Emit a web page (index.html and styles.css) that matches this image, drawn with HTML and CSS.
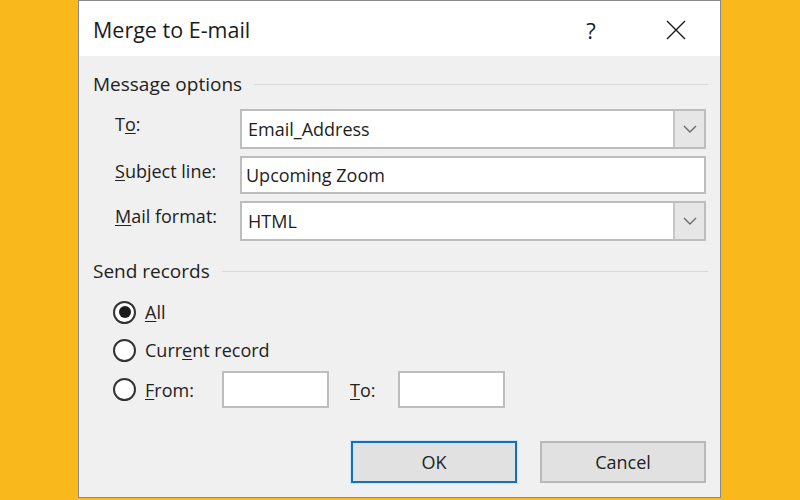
FILE: index.html
```html
<!DOCTYPE html>
<html lang="en">
<head>
<meta charset="utf-8">
<title>Merge to E-mail</title>
<link rel="stylesheet" href="styles.css">
</head>
<body>
<div class="dialog">
  <div class="titlebar">
    <div class="title">Merge to E-mail</div>
    <div class="tb-actions">
      <span class="tb-help">?</span>
      <span class="tb-close">
        <svg width="20" height="20" viewBox="0 0 20 20"><path d="M1 1 L19 19 M19 1 L1 19" stroke="#1a1a1a" stroke-width="1.4" fill="none"/></svg>
      </span>
    </div>
  </div>

  <div class="group-head">Message options</div>
  <div class="fields">
    <div class="label">T<u>o</u>:</div>
    <div class="combo">
      <div class="value">Email_Address</div>
      <div class="arrow"><svg width="14" height="8" viewBox="0 0 14 8"><path d="M1 1 L7 7 L13 1" stroke="#6a6a6a" stroke-width="1.4" fill="none"/></svg></div>
    </div>
    <div class="label"><u>S</u>ubject line:</div>
    <div class="textbox">Upcoming Zoom</div>
    <div class="label"><u>M</u>ail format:</div>
    <div class="combo">
      <div class="value">HTML</div>
      <div class="arrow"><svg width="14" height="8" viewBox="0 0 14 8"><path d="M1 1 L7 7 L13 1" stroke="#6a6a6a" stroke-width="1.4" fill="none"/></svg></div>
    </div>
  </div>

  <div class="group-head head-send">Send records</div>
  <div class="radios">
    <div class="radio-row row-all">
      <span class="radio checked"></span><span class="rlabel"><u>A</u>ll</span>
    </div>
    <div class="radio-row row-current">
      <span class="radio"></span><span class="rlabel">Curr<u>e</u>nt record</span>
    </div>
    <div class="radio-row row-from">
      <span class="radio"></span><span class="rlabel from-label"><u>F</u>rom:</span>
      <span class="smallbox"></span>
      <span class="to-label"><u>T</u>o:</span>
      <span class="smallbox"></span>
    </div>
  </div>

  <div class="buttons">
    <div class="btn primary">OK</div>
    <div class="btn">Cancel</div>
  </div>
</div>
</body>
</html>
```

FILE: styles.css
```css
body {
  margin: 0;
  background: #f9b81b;
  font-family: "Open Sans", "Noto Sans", sans-serif;
  color: #1e1e1e;
}

.dialog {
  margin-left: 78px;
  width: 643px;
  height: 498px;
  box-sizing: border-box;
  border: 1px solid #8a8a8a;
  background: #f0f0f0;
  display: flex;
  flex-direction: column;
}

.titlebar {
  height: 55px;
  background: #ffffff;
  display: flex;
  align-items: center;
  padding-left: 14px;
  padding-top: 2px;
  box-sizing: border-box;
}

.title {
  font-size: 21.5px;
  color: #1b1b1b;
  flex: 1;
}

.tb-actions {
  display: flex;
  align-items: center;
  padding-right: 21px;
}

.tb-help {
  width: 40px;
  text-align: center;
  font-size: 22px;
  margin-right: 42px;
  color: #1b1b1b;
}

.tb-close {
  width: 46px;
  display: flex;
  justify-content: center;
}

.group-head {
  display: flex;
  align-items: center;
  height: 22px;
  margin-top: 17px;
  padding-left: 14px;
  padding-right: 12px;
  font-size: 19px;
  color: #222;
}

.group-head::after {
  content: "";
  flex: 1;
  height: 1px;
  background: #d9d9d9;
  margin-left: 12px;
}

.head-send {
  margin-top: 19px;
}

.fields {
  margin-top: 14px;
  padding-left: 36px;
  padding-right: 14px;
  display: grid;
  grid-template-columns: 125px 1fr;
  row-gap: 7px;
}

.label {
  font-size: 18px;
  line-height: 22px;
  padding-top: 4px;
  color: #222;
}

u {
  text-underline-offset: 2px;
}

.combo {
  height: 40px;
  box-sizing: border-box;
  border: 2px solid #bdbdbd;
  background: #ffffff;
  display: flex;
}

.combo .value {
  flex: 1;
  align-self: center;
  padding-left: 6px;
  font-size: 18px;
}

.combo .arrow {
  width: 29px;
  background: #e6e6e6;
  border-left: 2px solid #c6c6c6;
  display: flex;
  align-items: center;
  justify-content: center;
}

.textbox {
  height: 38px;
  box-sizing: border-box;
  border: 2px solid #bdbdbd;
  background: #ffffff;
  display: flex;
  align-items: center;
  padding-left: 4px;
  font-size: 18px;
}

.radios {
  margin-top: 18px;
  padding-left: 34px;
  display: flex;
  flex-direction: column;
}

.radio-row {
  display: flex;
  align-items: center;
  height: 24px;
  font-size: 18px;
  color: #222;
}

.row-current {
  margin-top: 14px;
}

.row-from {
  margin-top: 9px;
  height: 37px;
}

.radio {
  width: 23px;
  height: 23px;
  box-sizing: border-box;
  border: 2px solid #333;
  border-radius: 50%;
  background: #ffffff;
  display: flex;
  align-items: center;
  justify-content: center;
}

.radio.checked::after {
  content: "";
  width: 12px;
  height: 12px;
  border-radius: 50%;
  background: #1a1a1a;
}

.rlabel {
  margin-left: 9px;
}

.from-label {
  width: 77px;
}

.to-label {
  width: 48px;
  margin-left: 21px;
}

.smallbox {
  width: 107px;
  height: 37px;
  box-sizing: border-box;
  border: 2px solid #bdbdbd;
  background: #ffffff;
}

.buttons {
  margin-top: 33px;
  display: flex;
  justify-content: flex-end;
  gap: 23px;
  padding-right: 14px;
}

.btn {
  width: 166px;
  height: 42px;
  box-sizing: border-box;
  background: #e1e1e1;
  border: 2px solid #b9b9b9;
  display: flex;
  align-items: center;
  justify-content: center;
  font-size: 18px;
  color: #222;
}

.btn.primary {
  border: 2px solid #1570b8;
  box-shadow: 0 0 0 1px #cfe5f5;
}
```
